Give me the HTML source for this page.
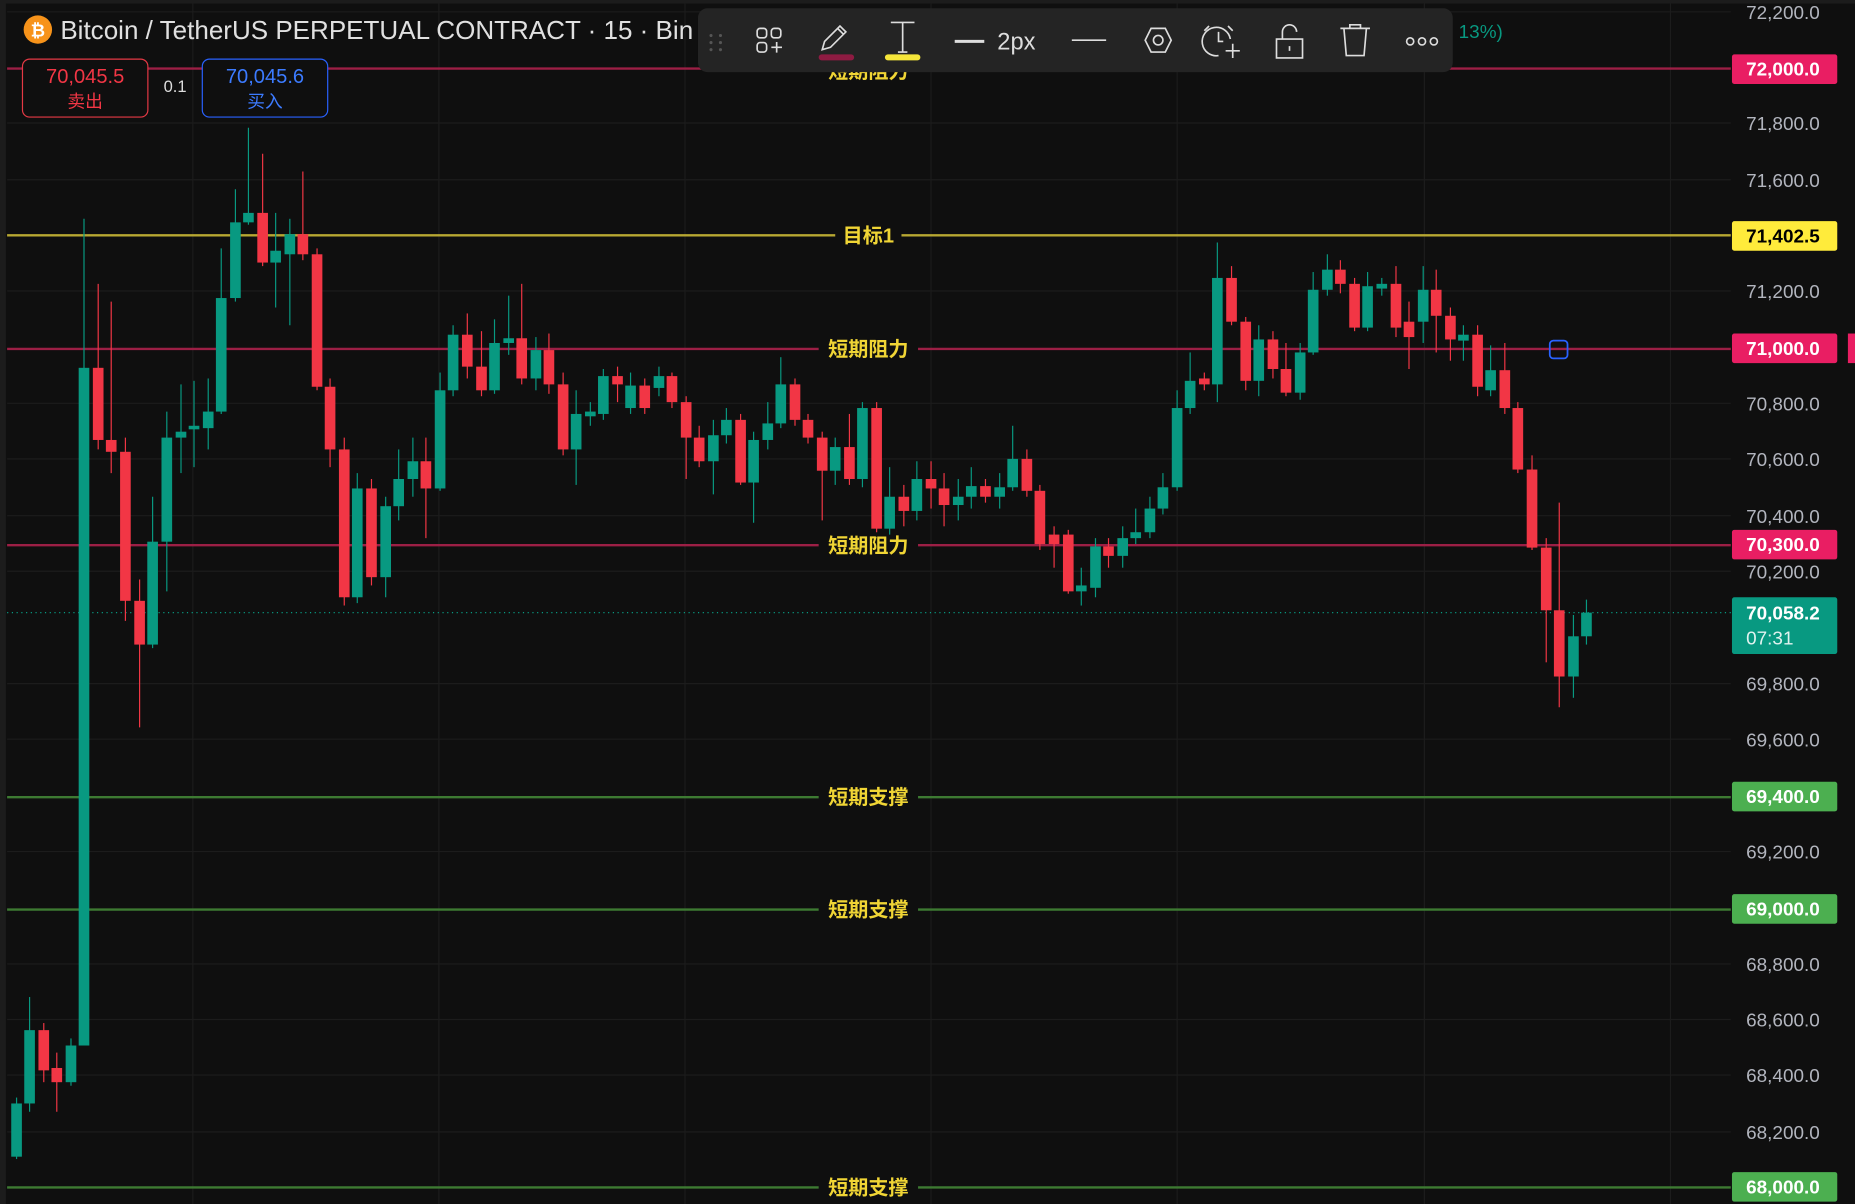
<!DOCTYPE html>
<html><head><meta charset="utf-8"><style>
html,body{margin:0;padding:0;background:#0f0f0f;overflow:hidden}
svg{display:block}
text{font-family:"Liberation Sans","Noto Sans CJK SC",sans-serif}
</style></head><body>
<svg width="1855" height="1204" viewBox="0 0 1568 1018" preserveAspectRatio="none" xmlns="http://www.w3.org/2000/svg">
<rect width="1568" height="1018" fill="#0f0f0f"/>
<rect x="0" y="0" width="1568" height="3" fill="#1c1c1c"/>
<rect x="0" y="0" width="5" height="1018" fill="#1c1c1c"/>
<g stroke="#1c1c1c" stroke-width="1">
<line x1="6" x2="1463" y1="10" y2="10"/><line x1="6" x2="1463" y1="104" y2="104"/><line x1="6" x2="1463" y1="152" y2="152"/><line x1="6" x2="1463" y1="246" y2="246"/><line x1="6" x2="1463" y1="341" y2="341"/><line x1="6" x2="1463" y1="388" y2="388"/><line x1="6" x2="1463" y1="436" y2="436"/><line x1="6" x2="1463" y1="483" y2="483"/><line x1="6" x2="1463" y1="578" y2="578"/><line x1="6" x2="1463" y1="625" y2="625"/><line x1="6" x2="1463" y1="720" y2="720"/><line x1="6" x2="1463" y1="815" y2="815"/><line x1="6" x2="1463" y1="862" y2="862"/><line x1="6" x2="1463" y1="909" y2="909"/><line x1="6" x2="1463" y1="957" y2="957"/>
<line x1="163" x2="163" y1="0" y2="1018"/><line x1="371" x2="371" y1="0" y2="1018"/><line x1="579" x2="579" y1="0" y2="1018"/><line x1="787" x2="787" y1="0" y2="1018"/><line x1="995" x2="995" y1="0" y2="1018"/><line x1="1204" x2="1204" y1="0" y2="1018"/><line x1="1412" x2="1412" y1="0" y2="1018"/>
</g>
<!-- horizontal drawn lines -->
<g stroke-width="2">
<line x1="6" x2="1463" y1="58" y2="58" stroke="#9c1f45"/>
<line x1="6" x2="706" y1="199" y2="199" stroke="#b8a832"/><line x1="762" x2="1463" y1="199" y2="199" stroke="#b8a832"/>
<line x1="6" x2="692" y1="295" y2="295" stroke="#9c1f45"/><line x1="776" x2="1463" y1="295" y2="295" stroke="#9c1f45"/>
<line x1="6" x2="692" y1="461" y2="461" stroke="#9c1f45"/><line x1="776" x2="1463" y1="461" y2="461" stroke="#9c1f45"/>
<line x1="6" x2="692" y1="674" y2="674" stroke="#3d7a32"/><line x1="776" x2="1463" y1="674" y2="674" stroke="#3d7a32"/>
<line x1="6" x2="692" y1="769" y2="769" stroke="#3d7a32"/><line x1="776" x2="1463" y1="769" y2="769" stroke="#3d7a32"/>
<line x1="6" x2="692" y1="1004" y2="1004" stroke="#3d7a32"/><line x1="776" x2="1463" y1="1004" y2="1004" stroke="#3d7a32"/>
</g>
<line x1="6" x2="1463" y1="518" y2="518" stroke="#089981" stroke-width="1" stroke-dasharray="1 3"/>
<g fill="#f0d535" font-size="17" font-weight="bold" text-anchor="middle">
<text x="734" y="205">目标1</text>
<text x="734" y="301">短期阻力</text>
<text x="734" y="467">短期阻力</text>
<text x="734" y="680">短期支撑</text>
<text x="734" y="775">短期支撑</text>
<text x="734" y="1010">短期支撑</text>
<text x="734" y="66">短期阻力</text>
</g>
<g id="c"></g>
<rect x="1310" y="288" width="15" height="15" rx="3" fill="none" stroke="#2962ff" stroke-width="1.5"/>
<!-- axis -->
<g fill="#b2b5be" font-size="16">
<text x="1476" y="16">72,200.0</text><text x="1476" y="110">71,800.0</text><text x="1476" y="158">71,600.0</text><text x="1476" y="252">71,200.0</text><text x="1476" y="347">70,800.0</text><text x="1476" y="394">70,600.0</text><text x="1476" y="442">70,400.0</text><text x="1476" y="489">70,200.0</text><text x="1476" y="584">69,800.0</text><text x="1476" y="631">69,600.0</text><text x="1476" y="726">69,200.0</text><text x="1476" y="821">68,800.0</text><text x="1476" y="868">68,600.0</text><text x="1476" y="915">68,400.0</text><text x="1476" y="963">68,200.0</text>
</g>
<g font-size="16" font-weight="bold">
<rect x="1464" y="46" width="89" height="25" rx="2" fill="#e91e63"/><text x="1476" y="64" fill="#fff">72,000.0</text>
<rect x="1464" y="187" width="89" height="25" rx="2" fill="#ffeb3b"/><text x="1476" y="205" fill="#000">71,402.5</text>
<rect x="1464" y="282" width="89" height="25" rx="2" fill="#e91e63"/><text x="1476" y="300" fill="#fff">71,000.0</text>
<rect x="1464" y="448" width="89" height="25" rx="2" fill="#e91e63"/><text x="1476" y="466" fill="#fff">70,300.0</text>
<rect x="1464" y="661" width="89" height="25" rx="2" fill="#4caf50"/><text x="1476" y="679" fill="#fff">69,400.0</text>
<rect x="1464" y="756" width="89" height="25" rx="2" fill="#4caf50"/><text x="1476" y="774" fill="#fff">69,000.0</text>
<rect x="1464" y="991" width="89" height="25" rx="2" fill="#4caf50"/><text x="1476" y="1009" fill="#fff">68,000.0</text>
<rect x="1464" y="505" width="89" height="48" rx="2" fill="#089981"/><text x="1476" y="524" fill="#fff">70,058.2</text><text x="1476" y="545" fill="#e0f2ef" font-weight="normal">07:31</text>
</g>
<rect x="1562" y="282" width="6" height="25" fill="#e91e63"/>
<!-- header -->
<circle cx="32" cy="25" r="12" fill="#f7931a"/><text x="32" y="31" fill="#fff" font-size="15" font-weight="bold" text-anchor="middle">₿</text>
<text x="51" y="33" fill="#e0e0e0" font-size="22">Bitcoin / TetherUS PERPETUAL CONTRACT · 15 · Bin</text>
<text x="1233" y="32" fill="#089981" font-size="16">13%)</text>
<rect x="19" y="50" width="106" height="49" rx="6" fill="#0f0f0f" stroke="#e53945" stroke-width="1"/>
<text x="72" y="70" fill="#f23645" font-size="17" text-anchor="middle">70,045.5</text>
<text x="72" y="91" fill="#f23645" font-size="15" text-anchor="middle">卖出</text>
<text x="148" y="78" fill="#ddd" font-size="14" text-anchor="middle">0.1</text>
<rect x="171" y="50" width="106" height="49" rx="6" fill="#0f0f0f" stroke="#2962ff" stroke-width="1"/>
<text x="224" y="70" fill="#3c7bff" font-size="17" text-anchor="middle">70,045.6</text>
<text x="224" y="91" fill="#3c7bff" font-size="15" text-anchor="middle">买入</text>
<!-- toolbar -->
<rect x="590" y="7" width="638" height="54" rx="8" fill="#242424"/>
<g fill="#555"><circle cx="601" cy="30" r="1.3"/><circle cx="609" cy="30" r="1.3"/><circle cx="601" cy="36" r="1.3"/><circle cx="609" cy="36" r="1.3"/><circle cx="601" cy="42" r="1.3"/><circle cx="609" cy="42" r="1.3"/></g>
<g fill="none" stroke="#ddd" stroke-width="1.4">
<rect x="640" y="24" width="8" height="8" rx="2.5"/><rect x="652" y="24" width="8" height="8" rx="2.5"/><rect x="640" y="36" width="8" height="8" rx="2.5"/><path d="M652 40h9M656.5 35.5v9"/>
<path d="M695 42l2-7 13-13 5 5-13 13z M708 24l5 5"/>
<path d="M753 19h20M763 19v25M759 44h8"/>
<path d="M807 35h25" stroke-width="2.5"/>
<path d="M906 34h29"/>
<path d="M968 34l5-10h12l5 10-5 10h-12z"/><circle cx="979" cy="34" r="4"/>
<path d="M1030 47a12 12 0 1 1 10-14M1030 27v8h4M1022 22l-4 4M1038 22l4 4M1042 37v12M1036 43h12"/>
<path d="M1079 33h22v16h-22z M1084 33v-6a6 6 0 0 1 12 0M1090 39v4"/>
<path d="M1133 24h25M1141 24v-3h9v3M1136 24l2 23h15l2-23"/>
<circle cx="1192" cy="35" r="3"/><circle cx="1202" cy="35" r="3"/><circle cx="1212" cy="35" r="3"/>
</g>
<rect x="692" y="46" width="30" height="5" rx="2.5" fill="#8e1b42"/>
<rect x="748" y="46" width="30" height="5" rx="2.5" fill="#f5e63a"/>
<text x="843" y="42" fill="#ddd" font-size="20">2px</text>
</svg>
<script>
var d=[[14,933,978,928,980,'g'],[25,871,933,843,940,'g'],[37,871,905,865,915,'r'],[48,903,915,890,940,'r'],[60,884,915,878,918,'g'],[71,311,884,185,884,'g'],[83,311,372,240,380,'r'],[94,372,382,255,400,'r'],[106,382,508,370,525,'r'],[118,508,545,490,615,'r'],[129,458,545,420,548,'g'],[141,370,458,348,500,'g'],[153,365,370,325,400,'g'],[164,360,363,322,395,'g'],[176,348,362,320,380,'g'],[187,252,348,210,350,'g'],[199,188,252,160,255,'g'],[210,180,188,108,190,'g'],[222,180,222,130,225,'r'],[233,212,222,180,260,'g'],[245,198,215,185,275,'g'],[256,198,215,145,220,'r'],[268,215,327,210,330,'r'],[279,327,380,320,395,'r'],[291,380,505,370,512,'r'],[302,413,505,400,510,'g'],[314,413,488,405,495,'r'],[326,428,488,420,505,'g'],[337,405,428,380,440,'g'],[349,390,405,370,420,'g'],[360,390,413,370,455,'r'],[372,330,413,315,415,'g'],[383,283,330,275,335,'g'],[395,283,310,265,320,'r'],[407,310,330,280,335,'r'],[418,290,330,270,333,'g'],[430,286,290,250,300,'g'],[441,286,320,240,325,'r'],[453,296,320,285,330,'g'],[464,296,325,282,333,'r'],[476,325,380,315,385,'r'],[487,350,380,330,410,'g'],[499,348,352,340,360,'g'],[510,318,350,312,355,'g'],[522,318,325,310,340,'r'],[533,326,345,315,350,'g'],[545,326,345,320,350,'r'],[557,318,328,310,335,'g'],[568,318,340,315,345,'r'],[580,340,370,335,405,'r'],[591,370,390,360,395,'r'],[603,368,390,355,418,'g'],[614,355,368,345,375,'g'],[626,355,408,350,410,'r'],[637,372,408,365,442,'g'],[649,358,372,340,380,'g'],[660,325,358,302,362,'g'],[672,325,355,320,360,'r'],[683,355,370,350,375,'r'],[695,370,398,365,440,'r'],[706,378,398,370,410,'g'],[718,378,405,350,410,'r'],[729,345,405,340,412,'g'],[741,345,447,340,450,'r'],[752,420,447,395,452,'g'],[764,420,432,410,445,'r'],[775,405,432,390,440,'g'],[787,405,413,390,430,'r'],[798,413,427,400,445,'r'],[810,420,427,405,440,'g'],[821,411,420,395,430,'g'],[833,411,420,405,425,'r'],[845,412,420,400,430,'g'],[856,388,412,360,415,'g'],[868,388,415,380,420,'r'],[879,415,460,410,465,'r'],[891,452,460,445,480,'r'],[903,452,500,448,502,'r'],[914,495,500,480,512,'g'],[926,462,497,455,505,'g'],[937,462,470,455,480,'r'],[949,455,470,445,480,'g'],[960,450,455,430,460,'g'],[972,430,450,420,455,'g'],[983,412,430,400,435,'g'],[995,345,412,330,415,'g'],[1006,322,345,298,350,'g'],[1018,320,325,315,330,'r'],[1029,235,325,205,340,'g'],[1041,235,272,225,275,'r'],[1053,272,322,268,330,'r'],[1064,287,322,275,335,'g'],[1076,287,312,280,320,'r'],[1087,312,332,290,335,'r'],[1099,298,332,290,338,'g'],[1110,245,298,230,300,'g'],[1122,228,245,215,250,'g'],[1133,228,240,220,248,'r'],[1145,240,277,235,280,'r'],[1156,242,277,230,280,'g'],[1168,240,244,235,250,'g'],[1180,240,277,225,285,'r'],[1191,272,285,255,312,'r'],[1203,245,272,225,290,'g'],[1214,245,267,228,298,'r'],[1226,267,287,260,305,'r'],[1237,283,288,275,305,'g'],[1249,283,327,275,335,'r'],[1260,313,330,292,335,'g'],[1272,313,345,290,350,'r'],[1283,345,397,340,400,'r'],[1295,397,463,385,465,'r'],[1307,463,516,455,560,'r'],[1318,516,572,425,598,'r'],[1330,538,572,520,590,'g'],[1341,518,538,507,545,'g']];
var s='';d.forEach(function(c){var col=c[5]=='g'?'#089981':'#f23645';s+='<line x1="'+c[0]+'" x2="'+c[0]+'" y1="'+c[3]+'" y2="'+c[4]+'" stroke="'+col+'" stroke-width="1"/><rect x="'+(c[0]-4.5)+'" y="'+c[1]+'" width="9" height="'+Math.max(1,c[2]-c[1])+'" fill="'+col+'"/>';});
document.getElementById('c').innerHTML=s;
</script>
</body></html>
